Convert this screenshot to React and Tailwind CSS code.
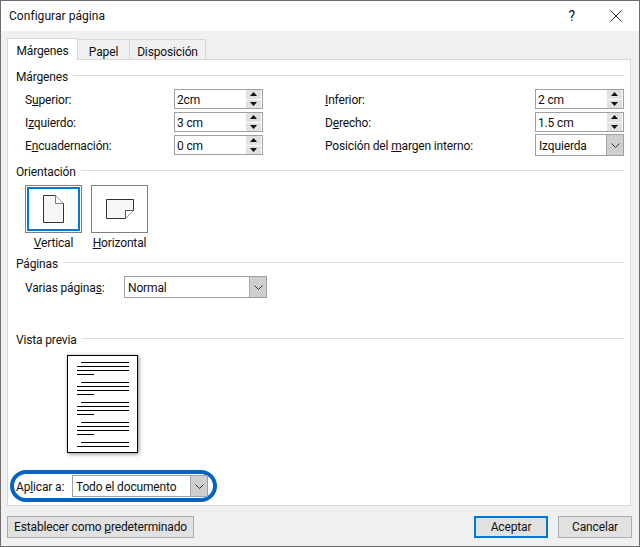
import { X } from "lucide-react"

function GroupHeader({ title, className = "" }) {
  return (
    <div className={`flex items-center h-4 ${className}`}>
      <span className="mr-[5px] pt-[4px]">{title}</span>
      <div className="flex-1 h-px bg-[#dcdcdc]" />
    </div>
  )
}

function Spinner({ value }) {
  return (
    <div className="flex items-center w-[89px] h-5 border border-[#a0a0a0] bg-white pl-[2px] pr-px">
      <span className="flex-1 pt-px">{value}</span>
      <div className="flex flex-col w-[15px] h-[18px] gap-px">
        <div className="flex-1 bg-[#e1e1e1] flex items-center justify-center">
          <svg width="7" height="4" viewBox="0 0 7 4"><path d="M3.5 0 7 4H0z" fill="#111" /></svg>
        </div>
        <div className="flex-1 bg-[#e1e1e1] flex items-center justify-center">
          <svg width="7" height="4" viewBox="0 0 7 4"><path d="M0 0h7L3.5 4z" fill="#111" /></svg>
        </div>
      </div>
    </div>
  )
}

function Select({ value, className = "" }) {
  return (
    <div className={`flex items-center h-[22px] border border-[#a0a0a0] bg-white pl-[3px] ${className}`}>
      <span className="flex-1 pt-px">{value}</span>
      <div className="w-[17px] h-5 bg-[#cfcfcf] border-l border-[#a8a8a8] flex items-center justify-center">
        <svg width="9" height="5" viewBox="0 0 9 5" fill="none"><path d="M.5.5l4 4 4-4" stroke="#333" /></svg>
      </div>
    </div>
  )
}

function Row({ left, leftValue, right, rightValue, rightSelect }) {
  return (
    <div className="flex items-center h-5">
      <div className="w-[149px] pt-px">{left}</div>
      <Spinner value={leftValue} />
      <div className="w-[62px]" />
      <div className="w-[210px] pt-px">{right}</div>
      {rightSelect ? <Select value={rightValue} className="w-[89px]" /> : <Spinner value={rightValue} />}
    </div>
  )
}

function OrientationButton({ active, label, children }) {
  return (
    <div className="flex flex-col items-center w-[57px]">
      <div className="w-[57px] h-[48px] border border-[#808080] bg-white p-px">
        <div className={`w-full h-full flex items-center justify-center border-2 ${active ? "border-[#0078d7]" : "border-white"}`}>
          {children}
        </div>
      </div>
      <div className="leading-5">{label}</div>
    </div>
  )
}

function PreviewBlock({ short }) {
  return (
    <div className="flex flex-col gap-[3px] mb-[7px]">
      <div className="h-px bg-black ml-[4px]" />
      <div className="h-px bg-black" />
      {!short && <div className="h-px bg-black" />}
      {!short && <div className="h-px bg-black w-[17px]" />}
    </div>
  )
}

function Button({ children, primary, className = "" }) {
  return (
    <div className={`h-[22px] flex items-center justify-center bg-[#e1e1e1] border ${primary ? "border-2 border-[#0078d7]" : "border-[#adadad]"} ${className}`}>
      <span>{children}</span>
    </div>
  )
}

export default function App() {
  return (
    <div className="w-[640px] h-[547px] flex flex-col bg-[#f0f0f0] border border-[#6d6d6d] text-[12px] tracking-[-0.15px] text-[#111] overflow-hidden" style={{ fontFamily: 'Roboto, sans-serif' }}>
      {/* Title bar */}
      <div className="h-[30px] shrink-0 bg-white flex items-center pl-[8px] pr-[12px]">
        <span className="flex-1 text-[12px] tracking-[0.05px]">Configurar página</span>
        <span className="text-[14px] mr-[30px]">?</span>
        <X size={22} strokeWidth={1} />
      </div>

      {/* Tabs */}
      <div className="flex items-end h-[28px] shrink-0 pl-[6px]">
        <div className="relative z-10 w-[71px] h-[22px] -mb-px pt-[2px] bg-white border border-b-0 border-[#d9d9d9] flex items-center justify-center">Márgenes</div>
        <div className="w-[52px] h-[20px] pt-[4px] bg-[#f0f0f0] border border-l-0 border-b-0 border-[#d9d9d9] flex items-center justify-center">Papel</div>
        <div className="w-[76px] h-[20px] pt-[4px] bg-[#f0f0f0] border border-l-0 border-b-0 border-[#d9d9d9] flex items-center justify-center">Disposición</div>
      </div>

      {/* Panel */}
      <div className="mx-[6px] w-[624px] h-[447px] shrink-0 bg-white border border-[#d9d9d9] pt-[7px] pl-[8px] pr-[6px]">
        <GroupHeader title="Márgenes" />
        <div className="pl-[9px] mt-[6px] flex flex-col gap-[3px]">
          <Row left={<>S<u>u</u>perior:</>} leftValue="2cm" right={<><u>I</u>nferior:</>} rightValue="2 cm" />
          <Row left={<>I<u>z</u>quierdo:</>} leftValue="3 cm" right={<>D<u>e</u>recho:</>} rightValue="1.5 cm" />
          <Row left={<>E<u>n</u>cuadernación:</>} leftValue="0 cm" right={<>Posición del <u>m</u>argen interno:</>} rightValue="Izquierda" rightSelect />
        </div>

        <GroupHeader title="Orientación" className="mt-[7px]" />
        <div className="flex gap-[9px] pl-[9px] mt-[7px]">
          <OrientationButton active label={<><u>V</u>ertical</>}>
            <svg width="21" height="28" viewBox="0 0 21 28" fill="#f7f8f6" stroke="#333">
              <path d="M.5.5h12l8 8v19H.5z" />
              <path d="M12.5.5v8h8" fill="#fff" stroke="#777" />
            </svg>
          </OrientationButton>
          <OrientationButton label={<><u>H</u>orizontal</>}>
            <svg width="28" height="20" viewBox="0 0 28 20" fill="#f7f8f6" stroke="#333">
              <path d="M.5.5h27v11l-8 8H.5z" />
              <path d="M19.5 19.5v-8h8" fill="#fff" stroke="#555" />
            </svg>
          </OrientationButton>
        </div>

        <GroupHeader title="Páginas" className="mt-[1px]" />
        <div className="flex items-center pl-[9px] mt-[6px]">
          <div className="w-[99px] pt-px">Varias página<u>s</u>:</div>
          <Select value="Normal" className="w-[143px]" />
        </div>

        <GroupHeader title="Vista previa" className="mt-[32px]" />
        <div className="ml-[51px] mt-[9px] w-[71px] h-[98px] bg-white border border-black shadow-[1px_1px_4px_rgba(0,0,0,0.45)] pt-[6px] pl-[9px] pr-[8px]">
          <PreviewBlock />
          <PreviewBlock />
          <PreviewBlock />
          <PreviewBlock />
          <PreviewBlock short />
        </div>

        <div className="flex items-center w-[207px] h-[32px] mt-[17px] -ml-[6px] pl-[2px] border-[4px] border-[#0563c1] rounded-full">
          <div className="w-[56px] pt-px">Ap<u>l</u>icar a:</div>
          <Select value="Todo el documento" className="w-[136px] shrink-0" />
        </div>
      </div>

      {/* Footer */}
      <div className="flex items-center mt-[10px] pl-[6px] pr-[7px]">
        <Button className="w-[187px]">Establecer como <u>p</u>redeterminado</Button>
        <div className="flex-1" />
        <Button primary className="w-[74px] mr-[10px]">Aceptar</Button>
        <Button className="w-[74px]">Cancelar</Button>
      </div>
    </div>
  )
}
